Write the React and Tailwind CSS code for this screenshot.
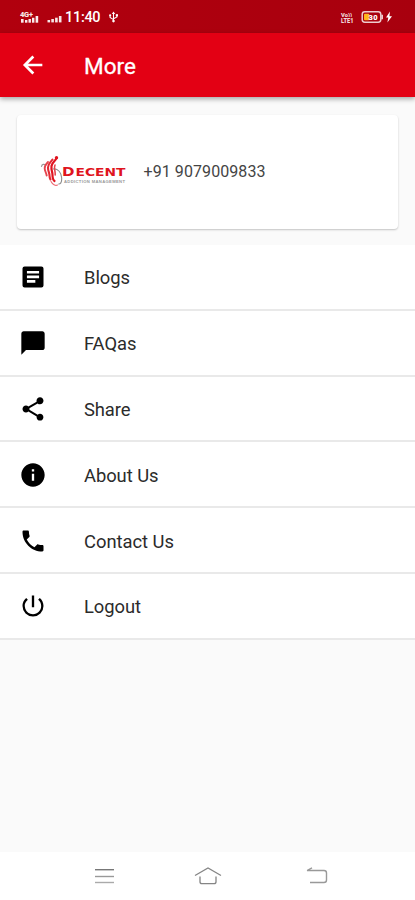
import { MdChatBubble, MdShare, MdInfo, MdPhone, MdPowerSettingsNew } from 'react-icons/md';

function ArticleIcon({ size, className }) {
  return (
    <svg className={className} width={size} height={size} viewBox="0 0 24 24" fill="currentColor">
      <path
        fillRule="evenodd"
        d="M4.800 3h14.400Q21 3 21 4.800v14.400q0 1.800-1.800 1.800H4.800Q3 21 3 19.200V4.800Q3 3 4.800 3zM6.800 6.800v2.300h10.400V6.800zM6.800 10.700V13h10.400v-2.300zM6.800 14.600v2.300h7.200v-2.300z"
      />
    </svg>
  );
}

const items = [
  { label: 'Blogs', Icon: ArticleIcon, width: 46 },
  { label: 'FAQas', Icon: MdChatBubble, width: 52.5 },
  { label: 'Share', Icon: MdShare, width: 46.5 },
  { label: 'About Us', Icon: MdInfo, width: 74.5 },
  { label: 'Contact Us', Icon: MdPhone, width: 90 },
  { label: 'Logout', Icon: MdPowerSettingsNew, width: 57 },
];

function Bars({ className }) {
  return (
    <svg className={className} width="16" height="8" viewBox="0 0 16 8" fill="#fff" fillOpacity=".9">
      <rect x="0.5" y="5" width="2.6" height="2.4" />
      <rect x="4.3" y="4" width="2.6" height="3.4" />
      <rect x="8.1" y="2.7" width="2.6" height="4.7" />
      <rect x="11.9" y="1" width="2.6" height="6.4" />
    </svg>
  );
}

function StatusBar() {
  return (
    <div className="flex h-[33px] shrink-0 items-center bg-linear-to-r from-[#b1000e] to-[#a8000e] pl-[19px] pr-[22px] pt-px text-white">
      <svg width="22" height="14" viewBox="0 0 22 14" fill="#fff" fillOpacity=".92">
        <text x="1" y="7" fontFamily="Roboto" fontSize="7.5" fontWeight="900" textLength="13">4G+</text>
        <rect x="2" y="9" width="2.6" height="3.7" />
        <rect x="6" y="10" width="2.4" height="2.7" />
        <rect x="9.5" y="9" width="2.4" height="3.7" />
        <rect x="13" y="7.8" width="2.4" height="4.9" />
        <rect x="16.6" y="6" width="2.6" height="6.7" />
      </svg>
      <Bars className="ml-[6px] mt-1" />
      <span className="ml-[2px] w-[36px] whitespace-nowrap pt-[2px] text-[14.5px] font-medium leading-none tracking-[-0.3px]">11:40</span>
      <svg className="ml-[7px]" width="11" height="12" viewBox="0 0 12 14" fill="none" stroke="#fff" strokeWidth="1.2">
        <path d="M6 2v10M2 5v2.5l4 2.5M10 5v2L6 9" />
        <path d="M6 .7l2 2.8H4z" fill="#fff" stroke="none" />
        <circle cx="2.1" cy="5" r="1.3" fill="#fff" stroke="none" />
        <rect x="8.7" y="3.7" width="2.5" height="2.5" fill="#fff" stroke="none" />
        <circle cx="6" cy="11.8" r="1.5" fill="#fff" stroke="none" />
      </svg>
      <div className="ml-auto flex flex-col">
        <svg width="15" height="6" viewBox="0 0 15 6" fill="#fff" fillOpacity=".85">
          <text x="1" y="5.5" fontFamily="Roboto" fontSize="6" fontWeight="900" textLength="11" lengthAdjust="spacingAndGlyphs">Vo))</text>
        </svg>
        <svg width="15" height="7" viewBox="0 0 15 7" fill="#fff" fillOpacity=".85">
          <text x="1" y="5.8" fontFamily="Roboto" fontSize="6.5" fontWeight="900" textLength="12.5" lengthAdjust="spacingAndGlyphs">LTE1</text>
        </svg>
      </div>
      <svg className="ml-[6px]" width="32" height="14" viewBox="0 0 32 14">
        <rect x="1.2" y="1.8" width="18.6" height="10.4" rx="2.6" fill="none" stroke="#fff" strokeOpacity=".8" strokeWidth="1.5" />
        <path d="M21.2 4.7v4.6" stroke="#fff" strokeOpacity=".8" strokeWidth="1.6" />
        <rect x="3" y="3.7" width="5.3" height="6.6" rx="1" fill="#ffb51b" />
        <text x="7.5" y="9.6" fill="#fff" fontFamily="Roboto" fontSize="7.5" fontWeight="900" textLength="9">30</text>
        <path d="M29 1.5l-4 6h2.3l-.9 5 4.6-6.3h-2.6z" fill="#fff" />
      </svg>
    </div>
  );
}

function Logo() {
  return (
    <svg width="88" height="36" viewBox="0 0 88 36" fill="none" strokeLinecap="round">
      <path d="M2.500 12.500c.5-2.500 2.500-2.500 4.500-1.500" stroke="#999" strokeWidth="1.200" />
      <path d="M14 15c5-1 8.500 4 8.700 9s-1.500 6-3 6" stroke="#8c8c8c" strokeWidth="1.100" />
      <path d="M17.500 4c-1 3-4.500 4-5 8-.500 4 1 6 1 9s.500 5 2 6" stroke="#e0131f" strokeWidth="2.200" />
      <path d="M13.500 5.500c-2 3-4.500 4-4.500 8 0 4 1.500 5 1.500 8 0 2 .500 3 1 4" stroke="#e22a34" strokeWidth="2.100" />
      <path d="M9 8c-2 2-3.500 3.500-3.300 6.500.2 3 1.500 4 2 7" stroke="#e5454e" strokeWidth="1.900" />
      <path d="M16 11c-1.500 3 .5 6 .2 10" stroke="#e5454e" strokeWidth="1.600" />
      <path d="M12 27.500c1.500 3 4.500 4.500 6.500 3.500" stroke="#ed6971" strokeWidth="1.100" />
      <circle cx="17.500" cy="3.800" r="1.700" fill="#e0131f" />
      <g fill="#df1420" fontFamily="'DejaVu Sans'" fontWeight="700">
        <text x="23" y="21.500" fontSize="12.600" textLength="12.500" lengthAdjust="spacingAndGlyphs">D</text>
        <text x="36.500" y="21.500" fontSize="10.500" textLength="50" lengthAdjust="spacingAndGlyphs">ECENT</text>
      </g>
      <text x="25" y="28.500" fill="#999" fontFamily="'Liberation Sans'" fontSize="4.200" fontWeight="700" textLength="61">ADDICTION MANAGEMENT</text>
    </svg>
  );
}

function NavBar() {
  return (
    <nav className="mt-auto flex h-12 shrink-0 items-center bg-white pl-[93px]">
      <svg width="22" height="20" viewBox="0 0 22 20" fill="none" strokeWidth="1.4">
        <path d="M2 3.700h19" stroke="#777" />
        <path d="M2 10.500h19" stroke="#999" />
        <path d="M2 16.500h19" stroke="#aaa" />
      </svg>
      <svg className="ml-[78px]" width="30" height="22" viewBox="0 0 30 22" fill="none" stroke="#858585" strokeWidth="1.300">
        <path d="M2 10.500L15 3l13 7.500M7 11.500v5.200q0 2 2 2h12q2 0 2-2v-5.200" />
      </svg>
      <svg className="ml-[82px]" width="24" height="20" viewBox="0 0 24 20" fill="none" stroke="#999" strokeWidth="1.400">
        <path d="M2 4.500h17q2.500 0 2.500 2.500v7q0 2.500-2.500 2.500H5M7 1.800L2 4.500" />
      </svg>
    </nav>
  );
}

export default function App() {
  return (
    <div className="flex h-[900px] w-[415px] flex-col overflow-hidden bg-[#fafafa] font-[Roboto,sans-serif]">
      <StatusBar />
      <header className="flex h-16 shrink-0 items-center bg-[#e30014] pl-[19px] text-white shadow-[0_2px_5px_rgba(0,0,0,0.35)]">
        <svg width="28" height="28" viewBox="0 0 24 24" fill="none" stroke="#fff" strokeWidth="2.300">
          <path d="M20 12H6M12.300 4.700L5 12l7.300 7.300" />
        </svg>
        <h1 className="ml-[37px] pt-[2px] text-[22.500px] font-normal leading-none [-webkit-text-stroke:0.3px_#fff]">More</h1>
      </header>
      <section className="mx-[17px] mt-[18px] flex h-[114px] shrink-0 items-center rounded-[4px] bg-white pl-[22px] shadow-[0_1px_2px_rgba(0,0,0,0.22)]">
        <Logo />
        <svg className="ml-[16px]" width="124" height="20" fill="#444">
          <text x="0.500" y="15" fontFamily="Roboto" fontSize="16" textLength="122">+91 9079009833</text>
        </svg>
      </section>
      <ul className="mt-[16px] flex shrink-0 flex-col">
        {items.map(({ label, Icon, width }) => (
          <li key={label} className="flex h-[65.800px] items-center border-b-2 border-[#e9e9e9] bg-white pl-[18.500px] pt-px">
            <Icon size={28} className="text-black" />
            <svg className="ml-[37px]" width="110" height="26" fill="#2b2b2b">
              <text x="0" y="19.500" fontFamily="Roboto" fontSize="18.400" textLength={width}>{label}</text>
            </svg>
          </li>
        ))}
      </ul>
      <NavBar />
    </div>
  );
}
